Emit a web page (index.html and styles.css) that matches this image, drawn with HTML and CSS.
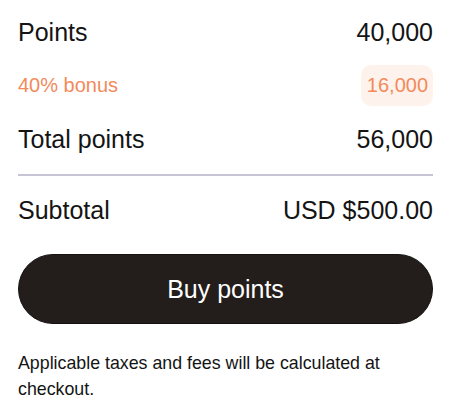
FILE: index.html
```html
<!DOCTYPE html>
<html lang="en">
<head>
<meta charset="utf-8">
<title>Buy points</title>
<link rel="stylesheet" href="styles.css">
</head>
<body>
<main class="checkout">
  <div class="summary">
    <div class="row">
      <span class="label">Points</span>
      <span class="value">40,000</span>
    </div>
    <div class="row row-bonus">
      <span class="label">40% bonus</span>
      <span class="value pill">16,000</span>
    </div>
    <div class="row row-total">
      <span class="label">Total points</span>
      <span class="value">56,000</span>
    </div>
  </div>
  <hr class="divider">
  <div class="row row-subtotal">
    <span class="label">Subtotal</span>
    <span class="value">USD $500.00</span>
  </div>
  <button class="buy-btn" type="button">Buy points</button>
  <p class="note">Applicable taxes and fees will be calculated at checkout.</p>
</main>
</body>
</html>
```

FILE: styles.css
```css
html, body {
  margin: 0;
  padding: 0;
  background: #ffffff;
}

body {
  font-family: "Liberation Sans", Arial, Helvetica, sans-serif;
  color: #141414;
}

.checkout {
  padding: 12px 17px 0 18px;
  display: flex;
  flex-direction: column;
}

.summary {
  display: flex;
  flex-direction: column;
  gap: 12px;
}

.row {
  height: 41px;
  display: flex;
  align-items: center;
  justify-content: space-between;
  font-size: 25px;
}

.row-total {
  margin-top: 1px;
}

.row-bonus {
  font-size: 20px;
  color: #f28a5c;
}

.pill {
  height: 41px;
  display: flex;
  align-items: center;
  padding: 0 5px 0 6px;
  background: #fef3ec;
  border-radius: 10px;
}

.divider {
  margin: 14px 0 0 0;
  border: 0;
  height: 2px;
  background: #c6c5d6;
}

.row-subtotal {
  margin-top: 14px;
}

.buy-btn {
  margin-top: 23px;
  height: 70px;
  border: 1px solid #141110;
  border-radius: 35px;
  background: #231e1b;
  color: #ffffff;
  font-family: "Liberation Sans", Arial, Helvetica, sans-serif;
  font-size: 25px;
  padding: 0;
  cursor: pointer;
}

.note {
  margin: 26px 0 0 0;
  font-size: 17.8px;
  line-height: 26px;
  color: #141414;
}
```
